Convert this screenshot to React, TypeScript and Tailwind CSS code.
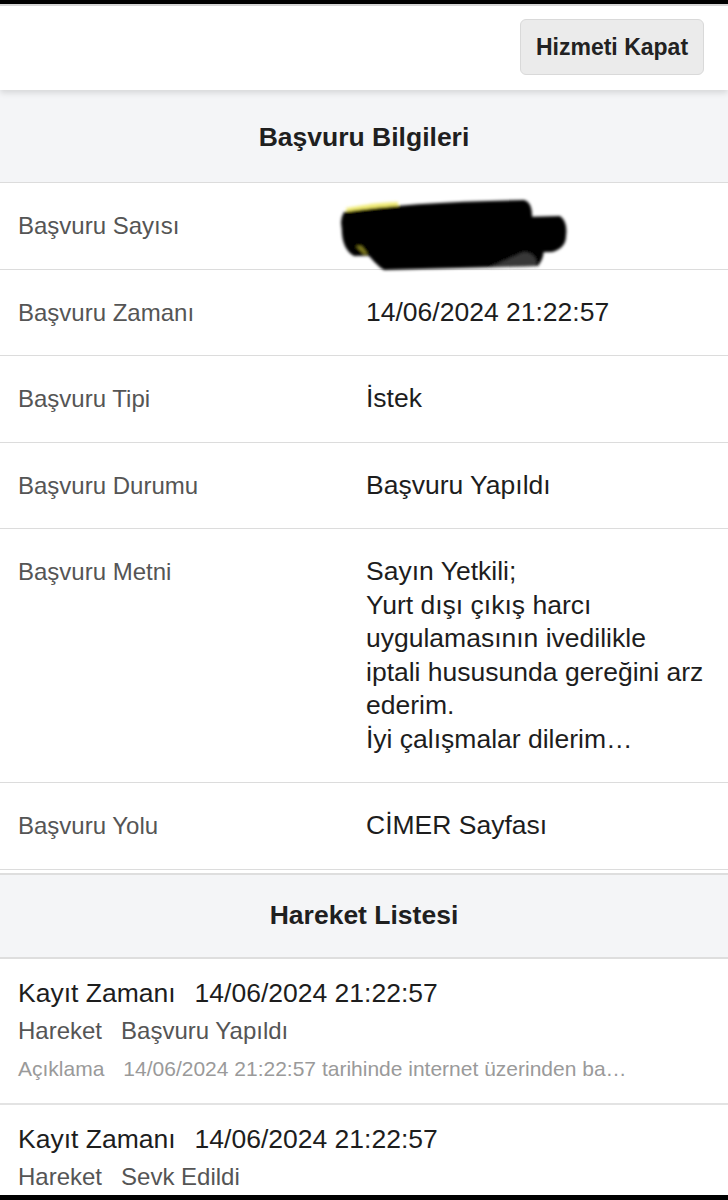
const font = { fontFamily: '"Liberation Sans", Arial, Helvetica, sans-serif' };

const rows: { label: string; value?: string; lines?: string[]; redacted?: boolean }[] = [
  { label: "Başvuru Sayısı", redacted: true },
  { label: "Başvuru Zamanı", value: "14/06/2024 21:22:57" },
  { label: "Başvuru Tipi", value: "İstek" },
  { label: "Başvuru Durumu", value: "Başvuru Yapıldı" },
  {
    label: "Başvuru Metni",
    lines: [
      "Sayın Yetkili;",
      "Yurt dışı çıkış harcı",
      "uygulamasının ivedilikle",
      "iptali hususunda gereğini arz",
      "ederim.",
      "İyi çalışmalar dilerim…",
    ],
  },
  { label: "Başvuru Yolu", value: "CİMER Sayfası" },
];

const moves = [
  {
    time: "14/06/2024 21:22:57",
    move: "Başvuru Yapıldı",
    note: "14/06/2024 21:22:57 tarihinde internet üzerinden başvuru yapıldı.",
  },
  { time: "14/06/2024 21:22:57", move: "Sevk Edildi" },
];

// marker scribble over the application number
function Redaction() {
  return (
    <svg
      className="absolute left-[-28px] top-[-13px] pointer-events-none"
      width="240"
      height="78"
      viewBox="0 0 240 78"
    >
      <defs>
        <filter id="blur" x="-10%" y="-20%" width="120%" height="140%">
          <feGaussianBlur stdDeviation="1.8" />
        </filter>
      </defs>
      <g filter="url(#blur)">
        <path d="M8 12 Q40 6 60 6 L60 14 L10 20 Z" fill="#e9e23c" opacity="0.7" />
        <path d="M6 16 Q70 6 186 4 Q194 6 194 20 L196 30 L6 38 Q0 26 6 16 Z" fill="#040404" />
        <path d="M4 26 L222 20 Q230 26 228 40 Q228 52 214 56 L16 60 Q2 52 4 26 Z" fill="#000" />
        <path d="M18 50 L60 52 L58 58 L26 58 Z" fill="#e3db38" opacity="0.6" />
        <path d="M22 48 L202 48 Q210 56 200 70 L46 74 Q36 68 22 48 Z" fill="#060606" />
        <path d="M186 56 Q200 58 198 70 L150 72 Z" fill="#6a6a6a" opacity="0.5" />
      </g>
    </svg>
  );
}

export default function App() {
  return (
    <div className="min-h-[1200px] bg-white flex flex-col text-[#1d1d1d]" style={font}>
      <div className="h-[4px] bg-black" />
      {/* header */}
      <div className="relative z-10 h-[86px] bg-white border-t-2 border-[#d6d6d6] shadow-[0_3px_6px_rgba(0,0,0,0.12)] flex items-start justify-end pt-[13px] pr-[24px]">
        <button className="w-[184px] h-[56px] rounded-[6px] bg-[#ebebeb] border border-[#d9d9d9] text-[23px] font-bold text-[#222]">
          Hizmeti Kapat
        </button>
      </div>

      <div className="h-[93px] bg-[#f4f5f7] border-b border-[#dcdcdc] flex items-center justify-center pt-[4px]">
        <h2 className="text-[26.5px] font-bold text-[#1f1f1f]">Başvuru Bilgileri</h2>
      </div>

      {rows.map((r) => (
        <div
          key={r.label}
          className="grid grid-cols-[348px_1fr] pl-[18px] pr-[8px] py-[26px] border-b border-[#dcdcdc] leading-[33.5px]"
        >
          <div className="text-[24px] text-[#555]">{r.label}</div>
          <div className="relative text-[26.5px] text-[#1d1d1d] whitespace-nowrap">
            {r.redacted ? (
              <>
                <span>&nbsp;</span>
                <Redaction />
              </>
            ) : r.lines ? (
              r.lines.map((l) => <div key={l}>{l}</div>)
            ) : (
              r.value
            )}
          </div>
        </div>
      ))}

      <div className="mt-[3px] h-[86px] bg-[#f4f5f7] border-t-2 border-b-2 border-[#dedede] flex items-center justify-center">
        <h2 className="text-[26.5px] font-bold text-[#1f1f1f]">Hareket Listesi</h2>
      </div>

      {moves.map((m, i) => (
        <div
          key={i}
          className="pl-[18px] pr-[96px] pt-[16px] pb-[14px] border-b-2 border-[#e3e3e3] flex flex-col"
        >
          <div className="flex gap-[19px] text-[26.5px] leading-[37px] text-[#1d1d1d]">
            <span>Kayıt Zamanı</span>
            <span>{m.time}</span>
          </div>
          <div className="flex gap-[19px] text-[24px] leading-[37px] text-[#555]">
            <span>Hareket</span>
            <span>{m.move}</span>
          </div>
          {m.note && (
            <div className="flex gap-[19px] text-[21px] leading-[40px] text-[#9a9a9a] min-w-0">
              <span className="shrink-0">Açıklama</span>
              <span className="truncate">{m.note}</span>
            </div>
          )}
        </div>
      ))}
      <div className="flex-1" />
      <div className="h-[5px] bg-black fixed bottom-0 left-0 right-0" />
    </div>
  );
}
